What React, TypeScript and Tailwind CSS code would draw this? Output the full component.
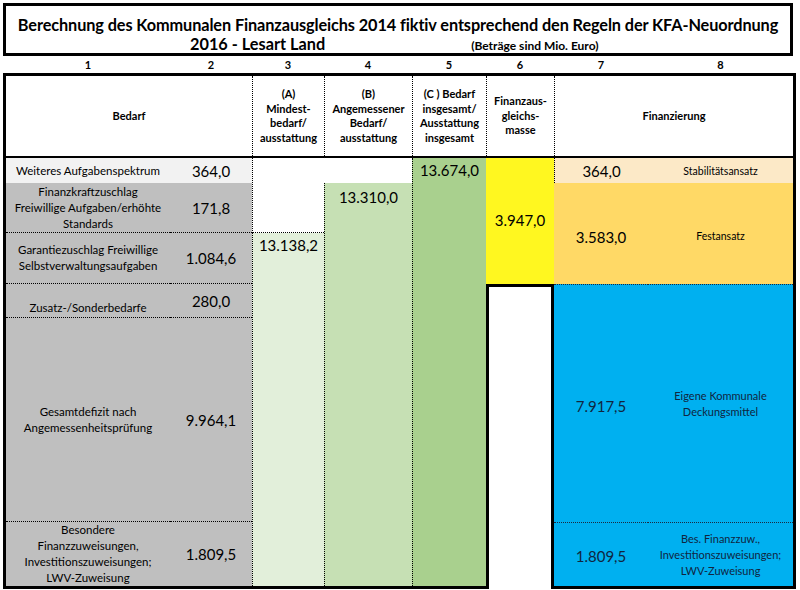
import React from "react";

const dotL = "border-l border-dotted border-black";

export default function App() {
  return (
    <div className="w-[800px] h-[590px] bg-white overflow-hidden font-['Lato',sans-serif] text-black">
      {/* Title box */}
      <div className="ml-[3px] mt-[3px] w-[790px] h-[53px] border-[3px] border-black flex flex-col">
        <div className="pt-[9px] leading-[20px] text-[16.3px] font-bold text-center tracking-[-0.1px]">
          Berechnung des Kommunalen Finanzausgleichs 2014 fiktiv entsprechend den Regeln der KFA-Neuordnung
        </div>
        <div className="flex items-baseline leading-[18px]">
          <span className="ml-[184px] text-[16.3px] font-bold">2016 - Lesart Land</span>
          <span className="ml-[146px] text-[12px] font-bold">(Beträge sind Mio. Euro)</span>
        </div>
      </div>

      {/* Column numbers */}
      <div className="ml-[6px] h-[17px] grid grid-cols-[164px_82px_72px_88px_74px_68px_94px_145px] text-[11px] font-bold leading-[17px] text-center">
        <div>1</div>
        <div>2</div>
        <div>3</div>
        <div>4</div>
        <div>5</div>
        <div>6</div>
        <div>7</div>
        <div>8</div>
      </div>

      {/* Table */}
      <div className="ml-[3px] w-[793px] border-[3px] border-black">
        {/* Header */}
        <div className="h-[82px] border-b-2 border-black grid grid-cols-[164px_82px_72px_88px_74px_68px_94px_145px] text-[11px] font-bold leading-[14.5px] text-center">
          <div className="col-span-2 flex items-center justify-center">Bedarf</div>
          <div className={`${dotL} flex items-center justify-center`}>
            <div>
              (A)
              <br />
              Mindest-
              <br />
              bedarf/
              <br />
              ausstattung
            </div>
          </div>
          <div className={`${dotL} flex items-center justify-center`}>
            <div>
              (B)
              <br />
              Angemessener
              <br />
              Bedarf/
              <br />
              ausstattung
            </div>
          </div>
          <div className={`${dotL} flex items-center justify-center`}>
            <div>
              (C ) Bedarf
              <br />
              insgesamt/
              <br />
              Ausstattung
              <br />
              insgesamt
            </div>
          </div>
          <div className={`${dotL} flex items-center justify-center`}>
            <div>
              Finanzaus-
              <br />
              gleichs-
              <br />
              masse
            </div>
          </div>
          <div className={`${dotL} col-span-2 flex items-center justify-center`}>
            Finanzierung
          </div>
        </div>

        {/* Body */}
        <div className="grid grid-cols-[164px_82px_72px_88px_74px_68px_94px_145px] grid-rows-[25px_50px_51px_34px_204px_64px] text-[11.5px] leading-[16px]">
          {/* Column 1-2 */}
          <div className="col-start-1 row-start-1 bg-[#f2f2f2] flex items-center justify-center">
            Weiteres Aufgabenspektrum
          </div>
          <div className="col-start-2 row-start-1 bg-[#f2f2f2] flex items-center justify-center text-[15px]">
            364,0
          </div>

          <div className="col-start-1 row-start-2 bg-[#bfbfbf] border-b border-dotted border-black flex items-center justify-center text-center">
            <div>
              Finanzkraftzuschlag
              <br />
              Freiwillige Aufgaben/erhöhte
              <br />
              Standards
            </div>
          </div>
          <div className="col-start-2 row-start-2 bg-[#bfbfbf] border-b border-dotted border-black flex items-center justify-center text-[15px]">
            171,8
          </div>

          <div className="col-start-1 row-start-3 bg-[#bfbfbf] border-b border-dotted border-black flex items-center justify-center text-center">
            <div>
              Garantiezuschlag Freiwillige
              <br />
              Selbstverwaltungsaufgaben
            </div>
          </div>
          <div className="col-start-2 row-start-3 bg-[#bfbfbf] border-b border-dotted border-black flex items-center justify-center text-[15px]">
            1.084,6
          </div>

          <div className="col-start-1 row-start-4 bg-[#bfbfbf] border-b border-dotted border-black flex items-end justify-center pb-[1px]">
            Zusatz-/Sonderbedarfe
          </div>
          <div className="col-start-2 row-start-4 bg-[#bfbfbf] border-b border-dotted border-black flex items-center justify-center text-[15px]">
            280,0
          </div>

          <div className="col-start-1 row-start-5 bg-[#bfbfbf] border-b border-dotted border-black flex items-center justify-center text-center">
            <div>
              Gesamtdefizit nach
              <br />
              Angemessenheitsprüfung
            </div>
          </div>
          <div className="col-start-2 row-start-5 bg-[#bfbfbf] border-b border-dotted border-black flex items-center justify-center text-[15px]">
            9.964,1
          </div>

          <div className="col-start-1 row-start-6 bg-[#bfbfbf] flex items-center justify-center text-center">
            <div>
              Besondere
              <br />
              Finanzzuweisungen,
              <br />
              Investitionszuweisungen;
              <br />
              LWV-Zuweisung
            </div>
          </div>
          <div className="col-start-2 row-start-6 bg-[#bfbfbf] flex items-center justify-center text-[15px]">
            1.809,5
          </div>

          {/* Column 3 */}
          <div className={`col-start-3 row-start-1 row-span-2 bg-white ${dotL} border-b`} />
          <div className={`col-start-3 row-start-3 row-span-4 bg-[#e2efda] ${dotL} text-[15px] leading-[18px] text-center pt-[3px]`}>
            13.138,2
          </div>

          {/* Column 4 */}
          <div className="col-start-4 row-start-1 bg-white" />
          <div className={`col-start-4 row-start-2 row-span-5 bg-[#c6e0b4] ${dotL} text-[15px] leading-[18px] text-center pt-[5px]`}>
            13.310,0
          </div>

          {/* Column 5 */}
          <div className={`col-start-5 row-start-1 row-span-6 bg-[#a9d08e] ${dotL} text-[15px] leading-[18px] text-center pt-[3px]`}>
            13.674,0
          </div>

          {/* Column 6 */}
          <div className="col-start-6 row-start-1 row-span-3 bg-[#fff720] flex items-center justify-center text-[15px] pb-[3px]">
            3.947,0
          </div>
          <div className="col-start-6 row-start-4 row-span-3 mb-[-3px] bg-white border-l-[3px] border-r-[3px] border-t-[3px] border-black" />

          {/* Column 7-8 */}
          <div className={`col-start-7 row-start-1 bg-[#fce9c7] ${dotL} flex items-center justify-center text-[15px]`}>
            364,0
          </div>
          <div className="col-start-8 row-start-1 bg-[#fce9c7] flex items-center justify-center text-[10.5px]">
            Stabilitätsansatz
          </div>

          <div className="col-start-7 row-start-2 row-span-2 bg-[#ffd966] flex items-center justify-center text-[15px] pt-[6px]">
            3.583,0
          </div>
          <div className="col-start-8 row-start-2 row-span-2 bg-[#ffd966] flex items-center justify-center text-[10.5px] pt-[4px]">
            Festansatz
          </div>

          <div className="col-start-7 row-start-4 row-span-2 bg-[#00b0f0] border-t border-dotted border-[#1a2a40] flex items-center justify-center text-[15px] text-[#10253f] pt-[4px]">
            7.917,5
          </div>
          <div className="col-start-8 row-start-4 row-span-2 bg-[#00b0f0] border-t border-dotted border-[#1a2a40] flex items-center justify-center text-center text-[11px] text-[#10253f]">
            <div>
              Eigene Kommunale
              <br />
              Deckungsmittel
            </div>
          </div>

          <div className="col-start-7 row-start-6 bg-[#00b0f0] border-t border-dotted border-[#1a2a40] flex items-center justify-center text-[15px] text-[#10253f] pt-[2px]">
            1.809,5
          </div>
          <div className="col-start-8 row-start-6 bg-[#00b0f0] border-t border-dotted border-[#1a2a40] flex items-center justify-center text-center text-[11px] text-[#10253f]">
            <div>
              Bes. Finanzzuw.,
              <br />
              Investitionszuweisungen;
              <br />
              LWV-Zuweisung
            </div>
          </div>
        </div>
      </div>
    </div>
  );
}
